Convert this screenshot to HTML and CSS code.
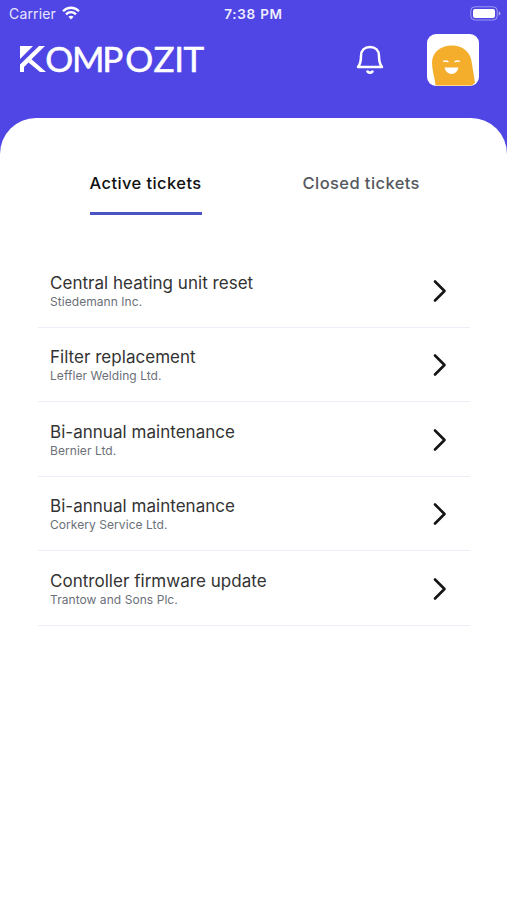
FILE: index.html
```
<!DOCTYPE html>
<html lang="en">
<head>
<meta charset="utf-8">
<title>Kompozit tickets</title>
<link rel="stylesheet" href="styles.css">
</head>
<body>
<header class="top">
  <div class="status">
    <div class="carrier"><span>Carrier</span>
      <svg width="18" height="14" viewBox="0 0 18 14" fill="none" stroke="#fff" stroke-width="2.3"><path d="M1 5.2C5.5.6 12.500.6 17 5.200M4 8.300C6.900 5.500 11.100 5.500 14 8.300"/><path d="M6.400 10.800C8 9.300 10 9.300 11.600 10.800L9 13.500Z" fill="#fff" stroke="none"/></svg>
    </div>
    <time class="clock">7:38 PM</time>
    <svg class="battery" width="32" height="15" viewBox="0 0 32 15"><rect x=".8" y=".8" width="26.400" height="13.200" rx="4" fill="none" stroke="#fff" stroke-opacity=".45"/><rect x="3" y="3" width="22" height="9" rx="2" fill="#fff"/><path d="M28.700 5.200Q30.500 6 30.500 7.400T28.700 9.600Z" fill="#fff" fill-opacity=".55"/></svg>
  </div>
  <div class="bar">
    <svg class="logo" width="188" height="30" viewBox="0 0 188 30" fill="#fff">
      <path class="mark" d="M0 0H13L0 13ZM19 0H25L11.500 13.300L26 26H20L8.500 16.500L4 21V26H0V18.500Z"/>
      <text y="25.700" x="25.300 52 82.200 105.300 133.500 154.300 163.500">OMPOZIT</text>
    </svg>
    <svg class="bell" width="28" height="30" viewBox="0 0 28 30" fill="none" stroke="#fff" stroke-width="2.500" stroke-linecap="round" stroke-linejoin="round"><path d="M2 22C4.500 19 5 17 5 11C5 5.500 8.500 2 14 2S23 5.500 23 11C23 17 23.500 19 26 22Z"/><path d="M11.500 26.500Q14 29 16.500 26.500"/></svg>
    <svg class="avatar" width="52" height="52" viewBox="0 0 52 52"><rect width="52" height="52" rx="9" fill="#fff"/><path d="M8.500 51C7.500 43 5 36 5 29C5 18 13.500 11.500 25 11.500C36 11.500 43 18 44.500 27L48 48.500Q46 51.500 43 51.500H9Z" fill="#f5ae2b"/><path d="M17.500 33.500H31.500Q30 40 24.500 40T17.500 33.500Z" fill="#fff"/><path d="M16 27.500Q19 26.300 21.500 28M27.500 28Q30 26.300 33 27.500" fill="none" stroke="#fff" stroke-width="1.300"/></svg>
  </div>
</header>
<main class="sheet">
  <nav class="tabs"><a class="tab active">Active tickets</a><a class="tab">Closed tickets</a></nav>
  <ul class="tickets">
    <li><div><h2>Central heating unit reset</h2><p>Stiedemann Inc.</p></div><svg class="chevron" viewBox="0 0 14 24"><path d="M2 2.500L11.500 12L2 21.500"/></svg></li>
    <li><div><h2>Filter replacement</h2><p>Leffler Welding Ltd.</p></div><svg class="chevron" viewBox="0 0 14 24"><path d="M2 2.500L11.500 12L2 21.500"/></svg></li>
    <li><div><h2>Bi-annual maintenance</h2><p>Bernier Ltd.</p></div><svg class="chevron" viewBox="0 0 14 24"><path d="M2 2.500L11.500 12L2 21.500"/></svg></li>
    <li><div><h2>Bi-annual maintenance</h2><p>Corkery Service Ltd.</p></div><svg class="chevron" viewBox="0 0 14 24"><path d="M2 2.500L11.500 12L2 21.500"/></svg></li>
    <li><div><h2>Controller firmware update</h2><p>Trantow and Sons Plc.</p></div><svg class="chevron" viewBox="0 0 14 24"><path d="M2 2.500L11.500 12L2 21.500"/></svg></li>
  </ul>
</main>
</body>
</html>
```
FILE: styles.css
```
* { box-sizing: border-box; }
body { margin: 0; height: 900px; overflow: hidden; background: #4f46e5; font-family: Inter, sans-serif; display: flex; flex-direction: column; }
.top { height: 118px; flex: none; color: #fff; }
.status { height: 28px; display: grid; grid-template-columns: 1fr auto 1fr; align-items: center; padding: 0 5px 0 9px; font-size: 14px; }
.carrier { display: flex; align-items: center; gap: 6px; letter-spacing: .15px; color: #e8e6ff; margin-top: -2px; }
.clock { font-weight: 600; font-size: 13.5px; letter-spacing: .75px; margin-right: 4px; color: #f0eeff; }
.battery { justify-self: end; margin-top: -2px; }
.bar { display: flex; align-items: flex-start; padding: 0 28px 0 20px; }
.logo { margin-top: 18px; overflow: visible; font: 35px Lato, sans-serif; stroke: #fff; stroke-width: .5px; }
.mark { stroke: none; }
.bell { margin: 17px 0 0 148px; }
.avatar { margin: 6px 0 0 auto; }
.sheet { flex: 1; background: #fff; border-radius: 36px 36px 0 0; padding: 48px 37px 0 38px; }
.tabs { display: flex; gap: 101px; padding-left: 51.500px; height: 87.200px; }
.tab { height: 49px; padding-top: 5px; line-height: 24px; font-size: 16.500px; font-weight: 500; letter-spacing: .41px; color: #55585e; white-space: nowrap; }
.active { color: #111; border-bottom: 3px solid #4a54c4; }
.tickets { list-style: none; margin: 0; padding: 0; }
.tickets li { height: 74.500px; border-bottom: 1px solid #eceef8; display: flex; align-items: flex-start; justify-content: space-between; padding: 18.600px 23px 0 12px; }
h2 { margin: 0; font-size: 17px; line-height: 22px; font-weight: 400; letter-spacing: .03px; color: #333; }
p { margin: 0; font-size: 12px; line-height: 15px; letter-spacing: .06px; color: #6b7078; }
.chevron { width: 14px; height: 24px; margin-top: 7px; fill: none; stroke: #151515; stroke-width: 2.600; stroke-linecap: round; stroke-linejoin: round; }
```
